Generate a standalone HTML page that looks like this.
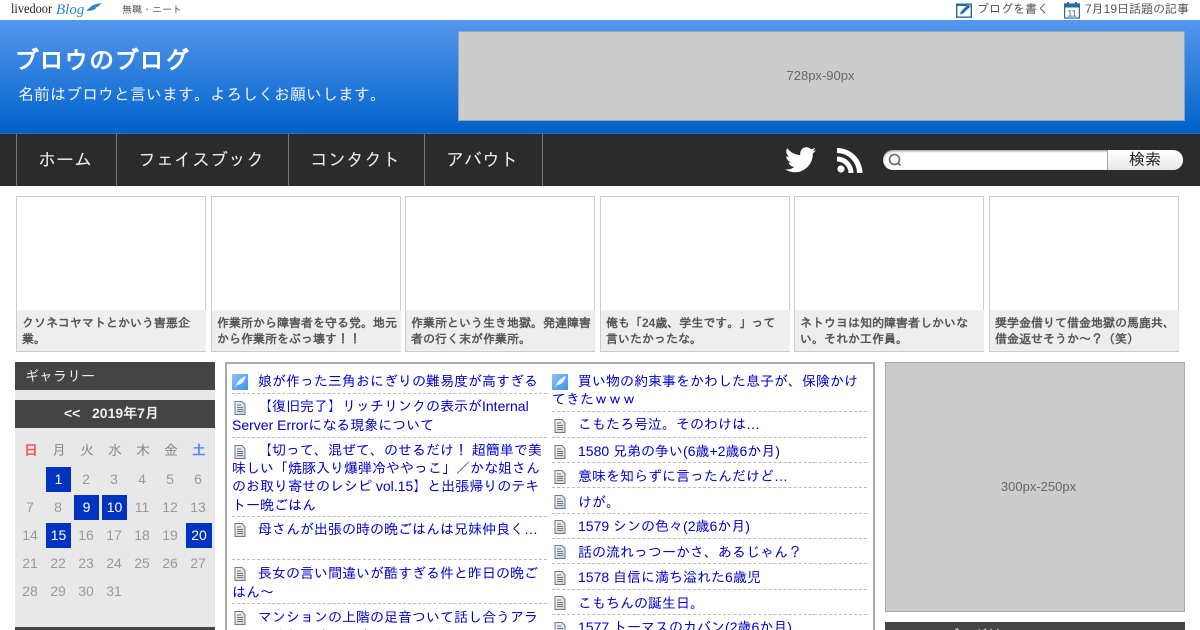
<!DOCTYPE html>
<html lang="ja"><head><meta charset="utf-8"><title>ブロウのブログ</title>
<style>
html,body{margin:0;padding:0;background:#fff;width:1200px;height:630px;overflow:hidden}
#w{position:relative;width:1200px;height:630px;overflow:hidden;font-family:"Liberation Sans","IPAGothic","Noto Sans CJK JP",sans-serif}
.a{position:absolute;white-space:nowrap}
.hdr{left:0;top:20px;width:1200px;height:113px;background:linear-gradient(#5597ee,#0062c9)}
.nav{left:0;top:133px;width:1200px;height:53px;background:#2b2b2b;border-top:1px solid #1d73c4;box-sizing:border-box}
.sep{top:134px;width:1px;height:52px;background:#777}
.nt{top:148px;font-size:18px;line-height:24px;color:#eee}
.card{top:196px;width:190px;height:156px;box-sizing:border-box;border:1px solid #ccc;border-bottom:2px solid #ccc;background:#fff}
.cap{position:absolute;left:0;right:-1px;top:113px;height:41px;background:#eee;font-size:12px;font-weight:bold;line-height:16px;color:#555;padding:5px 4px 0 5px;box-sizing:border-box;white-space:normal}
.wd{top:441px;width:28px;text-align:center;font-size:14px;line-height:18px;color:#888}
.d{width:28px;text-align:center;font-size:14px;line-height:18px;color:#999}
.on{background:#0033c0;color:#fff;line-height:25px;height:25px;width:25px}
.l{font-size:14px;line-height:19px;color:#0000cc}
.dash{height:0;border-top:1px dashed #bbb;width:315px}
.r{left:552px}.le{left:232px}
</style></head><body><div id="w">

<div class="a" style="left:11px;top:2px;font:14px/16px 'Liberation Serif',serif;color:#222;transform:scaleX(.88);transform-origin:left">livedoor</div>
<div class="a" style="left:56px;top:1px;font:italic 15px/18px 'Liberation Serif',serif;color:#2c86c9">Blog</div>
<svg class="a" style="left:83px;top:2px" width="19" height="14" viewBox="0 0 20 14"><path d="M1 14C4 7 10 1 20 1 17 3 17 4 15 5L13 5 14 6C11 9 7 9 4 9Z" fill="#2c86c9"/></svg>
<div class="a" style="left:122px;top:4px;font-size:10px;line-height:14px;color:#555">無職・ニート</div>

<svg class="a" style="left:956px;top:2px" width="17" height="16" viewBox="0 0 17 16"><rect x=".7" y="2.2" width="14.6" height="13" fill="#fff" stroke="#2a6a9e" stroke-width="1.4"/><rect x="1" y="2" width="10" height="2" fill="#2a6a9e"/><path d="M4 12.5L5 9.500 12 2.500 14.500 4.500 7 11.500Z" fill="#2a6a9e"/></svg>
<div class="a" style="left:977px;top:1px;font-size:12px;line-height:16px;color:#555">ブログを書く</div>
<svg class="a" style="left:1064px;top:1px" width="16" height="18" viewBox="0 0 16 18"><rect x=".6" y="3" width="14.800" height="14" fill="#fff" stroke="#2a6a9e" stroke-width="1.2"/><rect x="1" y="3" width="14" height="3.500" fill="#2a6a9e"/><rect x="3" y="1" width="2" height="3" fill="#2a6a9e"/><rect x="11" y="1" width="2" height="3" fill="#2a6a9e"/><text x="8" y="15.500" font-size="9" text-anchor="middle" fill="#2a6a9e" font-family="Liberation Sans">11</text></svg>
<div class="a" style="left:1085px;top:1px;font-size:12px;line-height:16px;color:#555">7月19日話題の記事</div>

<div class="a hdr"></div>
<div class="a" style="left:14px;top:45px;font-size:25px;line-height:32px;font-weight:bold;color:#fff">ブロウのブログ</div>
<div class="a" style="left:18px;top:83px;font-size:16px;line-height:22px;color:#f0f5ff;margin-top:2px">名前はブロウと言います。よろしくお願いします。</div>
<div class="a" style="left:458px;top:31px;width:727px;height:90px;box-sizing:border-box;background:#ccc;border:1px solid #8fa5bd;padding-right:2px;text-align:center;font-size:13px;line-height:88px;color:#666">728px-90px</div>

<div class="a nav"></div>
<div class="a sep" style="left:16px"></div><div class="a sep" style="left:116px"></div><div class="a sep" style="left:288px"></div><div class="a sep" style="left:424px"></div><div class="a sep" style="left:542px"></div>
<div class="a nt" style="left:38px">ホーム</div>
<div class="a nt" style="left:138px">フェイスブック</div>
<div class="a nt" style="left:310px">コンタクト</div>
<div class="a nt" style="left:446px">アバウト</div>

<svg class="a" style="left:785px;top:147px" width="31" height="26" viewBox="0 0 24 20"><path d="M24 2.400c-.9.400-1.800.7-2.800.8 1-.6 1.800-1.600 2.200-2.700-1 .6-2 1-3.100 1.200A4.900 4.900 0 0 0 11.900 6.200C7.800 6 4.200 4 1.700.9a4.900 4.900 0 0 0 1.500 6.600c-.8 0-1.600-.2-2.200-.6 0 2.400 1.700 4.400 3.900 4.900-.7.200-1.500.2-2.200.1.600 2 2.400 3.400 4.600 3.400A9.900 9.900 0 0 1 0 17.300 14 14 0 0 0 21.500 4.900c1-.7 1.800-1.500 2.500-2.500z" fill="#fff"/></svg>
<svg class="a" style="left:836px;top:147px" width="27" height="27" viewBox="0 0 27 27"><circle cx="5" cy="22" r="3.600" fill="#fff"/><path d="M1 9.500A16.500 16.500 0 0 1 17.500 26H12.500A11.500 11.500 0 0 0 1 14.500Z" fill="#fff"/><path d="M1 1A25.500 25.500 0 0 1 26.500 26H21A20 20 0 0 0 1 6Z" fill="#fff"/></svg>

<div class="a" style="left:883px;top:150px;width:300px;height:20px;background:#fff;border-radius:10px;overflow:hidden;box-shadow:inset 0 1px 2px #888">
<div class="a" style="left:224px;top:0;width:74px;padding-right:2px;height:20px;background:linear-gradient(#fff,#e8e8e8);border-left:1px solid #aaa;text-align:center;font-size:16px;line-height:22px;color:#222">検索</div></div>
<svg class="a" style="left:887px;top:152px" width="16" height="16" viewBox="0 0 16 16"><circle cx="7.500" cy="7.500" r="5" fill="none" stroke="#666" stroke-width="1.600"/><path d="M11 11L13.500 13.500" stroke="#666" stroke-width="1.600"/></svg>

<div class="a card" style="left:16px"><div class="cap">クソネコヤマトとかいう害悪企業。</div></div>
<div class="a card" style="left:211px"><div class="cap">作業所から障害者を守る党。地元から作業所をぶっ壊す！！</div></div>
<div class="a card" style="left:405px"><div class="cap">作業所という生き地獄。発達障害者の行く末が作業所。</div></div>
<div class="a card" style="left:600px"><div class="cap">俺も「24歳、学生です。」って言いたかったな。</div></div>
<div class="a card" style="left:794px"><div class="cap">ネトウヨは知的障害者しかいない。それか工作員。</div></div>
<div class="a card" style="left:989px"><div class="cap">奨学金借りて借金地獄の馬鹿共、借金返せそうか～？（笑）</div></div>

<div class="a" style="left:15px;top:362px;width:200px;height:28px;background:#444"></div>
<div class="a" style="left:25px;top:366px;font-size:14px;line-height:20px;color:#eee">ギャラリー</div>
<div class="a" style="left:15px;top:390px;width:200px;height:240px;background:#e8e8e8"></div>
<div class="a" style="left:15px;top:400px;width:200px;height:28px;background:#444"></div>
<div class="a" style="left:64px;top:404px;font-size:14px;font-weight:bold;line-height:19px;color:#eee">&lt;&lt;</div>
<div class="a" style="left:92px;top:404px;font-size:14px;font-weight:bold;line-height:19px;color:#eee">2019年7月</div>
<div class="a wd" style="left:17px;color:#ee5555;font-weight:bold">日</div>
<div class="a wd" style="left:45px">月</div><div class="a wd" style="left:73px">火</div><div class="a wd" style="left:101px">水</div><div class="a wd" style="left:129px">木</div><div class="a wd" style="left:157px">金</div>
<div class="a wd" style="left:185px;color:#5588ee;font-weight:bold">土</div>

<div class="a d" style="left:72px;top:470px">2</div><div class="a d" style="left:100px;top:470px">3</div><div class="a d" style="left:128px;top:470px">4</div><div class="a d" style="left:156px;top:470px">5</div><div class="a d" style="left:184px;top:470px">6</div>
<div class="a d on" style="left:46px;top:467px">1</div>
<div class="a d" style="left:16px;top:498px">7</div><div class="a d" style="left:44px;top:498px">8</div>
<div class="a d on" style="left:74px;top:495px">9</div><div class="a d on" style="left:102px;top:495px">10</div>
<div class="a d" style="left:128px;top:498px">11</div><div class="a d" style="left:156px;top:498px">12</div><div class="a d" style="left:184px;top:498px">13</div>
<div class="a d" style="left:16px;top:526px">14</div>
<div class="a d on" style="left:46px;top:523px">15</div>
<div class="a d" style="left:72px;top:526px">16</div><div class="a d" style="left:100px;top:526px">17</div><div class="a d" style="left:128px;top:526px">18</div><div class="a d" style="left:156px;top:526px">19</div>
<div class="a d on" style="left:186px;top:523px;width:26px">20</div>
<div class="a d" style="left:16px;top:554px">21</div><div class="a d" style="left:44px;top:554px">22</div><div class="a d" style="left:72px;top:554px">23</div><div class="a d" style="left:100px;top:554px">24</div><div class="a d" style="left:128px;top:554px">25</div><div class="a d" style="left:156px;top:554px">26</div><div class="a d" style="left:184px;top:554px">27</div>
<div class="a d" style="left:16px;top:582px">28</div><div class="a d" style="left:44px;top:582px">29</div><div class="a d" style="left:72px;top:582px">30</div><div class="a d" style="left:100px;top:582px">31</div>
<div class="a" style="left:15px;top:627px;width:200px;height:3px;background:#444"></div>

<div class="a" style="left:225px;top:362px;width:650px;height:280px;box-sizing:border-box;border:2px solid #aaa;background:#fff"></div>

<svg width="0" height="0" style="position:absolute"><defs>
<linearGradient id="g" x1="0" y1="0" x2="1" y2="1"><stop offset="0" stop-color="#f4f4f4"/><stop offset="1" stop-color="#c9d0d6"/></linearGradient>
<linearGradient id="b" x1="0" y1="0" x2="1" y2="1"><stop offset="0" stop-color="#8cc4f6"/><stop offset="1" stop-color="#3f8ee6"/></linearGradient>
<symbol id="doc" viewBox="0 0 12 14"><path d="M1 .5H8L11 3.500V13.500H1Z" fill="url(#g)" stroke="#707a82"/><path d="M3 4H7M3 6.500H9M3 8.500H9M3 10.500H9" stroke="#707a82"/></symbol>
<symbol id="fea" viewBox="0 0 16 16"><rect width="16" height="16" fill="url(#b)"/><path d="M3 14C4 9 8 4 14 2 13 7 9 11 5 11Z" fill="#e6f2ff"/></symbol>
</defs></svg>

<svg class="a" style="left:232px;top:374px" width="16" height="16"><use href="#fea"/></svg>
<div class="a l" style="left:258px;top:372px">娘が作った三角おにぎりの難易度が高すぎる</div>
<div class="a dash le" style="top:393px"></div>
<svg class="a" style="left:234px;top:401px" width="12" height="14"><use href="#doc"/></svg>
<div class="a l" style="left:258px;top:397px">【復旧完了】リッチリンクの表示がInternal</div>
<div class="a l" style="left:232px;top:416px">Server Errorになる現象について</div>
<div class="a dash le" style="top:437px"></div>
<svg class="a" style="left:234px;top:445px" width="12" height="14"><use href="#doc"/></svg>
<div class="a l" style="left:258px;top:441px">【切って、混ぜて、のせるだけ！ 超簡単で美</div>
<div class="a l" style="left:232px;top:459px">味しい「焼豚入り爆弾冷ややっこ」／かな姐さん</div>
<div class="a l" style="left:232px;top:477px">のお取り寄せのレシピ vol.15】と出張帰りのテキ</div>
<div class="a l" style="left:232px;top:496px">トー晩ごはん</div>
<div class="a dash le" style="top:516px"></div>
<svg class="a" style="left:234px;top:523px" width="12" height="14"><use href="#doc"/></svg>
<div class="a l" style="left:258px;top:520px">母さんが出張の時の晩ごはんは兄妹仲良く…</div>
<div class="a dash le" style="top:559px"></div>
<svg class="a" style="left:234px;top:567px" width="12" height="14"><use href="#doc"/></svg>
<div class="a l" style="left:258px;top:564px">長女の言い間違いが酷すぎる件と昨日の晩ご</div>
<div class="a l" style="left:232px;top:583px">はん～</div>
<div class="a dash le" style="top:603px"></div>
<svg class="a" style="left:234px;top:611px" width="12" height="14"><use href="#doc"/></svg>
<div class="a l" style="left:258px;top:608px">マンションの上階の足音ついて話し合うアラ</div>
<div class="a l" style="left:232px;top:627px">フォー夫婦と昨日の晩ごはんなど</div>

<svg class="a" style="left:552px;top:374px" width="16" height="16"><use href="#fea"/></svg>
<div class="a l" style="left:578px;top:372px">買い物の約束事をかわした息子が、保険かけ</div>
<div class="a l" style="left:552px;top:390px">てきたｗｗｗ</div>
<div class="a dash r" style="top:411px"></div>
<svg class="a" style="left:554px;top:419px" width="12" height="14"><use href="#doc"/></svg>
<div class="a l" style="left:578px;top:415px">こもたろ号泣。そのわけは…</div>
<div class="a dash r" style="top:437px"></div>
<svg class="a" style="left:554px;top:445px" width="12" height="14"><use href="#doc"/></svg>
<div class="a l" style="left:578px;top:442px">1580 兄弟の争い(6歳+2歳6か月)</div>
<div class="a dash r" style="top:462px"></div>
<svg class="a" style="left:554px;top:470px" width="12" height="14"><use href="#doc"/></svg>
<div class="a l" style="left:578px;top:467px">意味を知らずに言ったんだけど…</div>
<div class="a dash r" style="top:487px"></div>
<svg class="a" style="left:554px;top:495px" width="12" height="14"><use href="#doc"/></svg>
<div class="a l" style="left:578px;top:493px">けが。</div>
<div class="a dash r" style="top:513px"></div>
<svg class="a" style="left:554px;top:520px" width="12" height="14"><use href="#doc"/></svg>
<div class="a l" style="left:578px;top:517px">1579 シンの色々(2歳6か月)</div>
<div class="a dash r" style="top:538px"></div>
<svg class="a" style="left:554px;top:545px" width="12" height="14"><use href="#doc"/></svg>
<div class="a l" style="left:578px;top:543px">話の流れっつーかさ、あるじゃん？</div>
<div class="a dash r" style="top:563px"></div>
<svg class="a" style="left:554px;top:571px" width="12" height="14"><use href="#doc"/></svg>
<div class="a l" style="left:578px;top:568px">1578 自信に満ち溢れた6歳児</div>
<div class="a dash r" style="top:589px"></div>
<svg class="a" style="left:554px;top:596px" width="12" height="14"><use href="#doc"/></svg>
<div class="a l" style="left:578px;top:594px">こもちんの誕生日。</div>
<div class="a dash r" style="top:614px"></div>
<svg class="a" style="left:554px;top:622px" width="12" height="14"><use href="#doc"/></svg>
<div class="a l" style="left:578px;top:618px">1577 トーマスのカバン(2歳6か月)</div>

<div class="a" style="left:885px;top:362px;width:300px;height:250px;box-sizing:border-box;background:#ccc;border:1px solid #aaa;padding-left:7px;text-align:center;font-size:13px;line-height:248px;color:#666">300px-250px</div>
<div class="a" style="left:885px;top:622px;width:300px;height:8px;background:#444;overflow:hidden"><div class="a" style="left:60px;top:4px;font-size:14px;line-height:18px;color:#eee">ブログ村</div></div>
</div></body></html>
